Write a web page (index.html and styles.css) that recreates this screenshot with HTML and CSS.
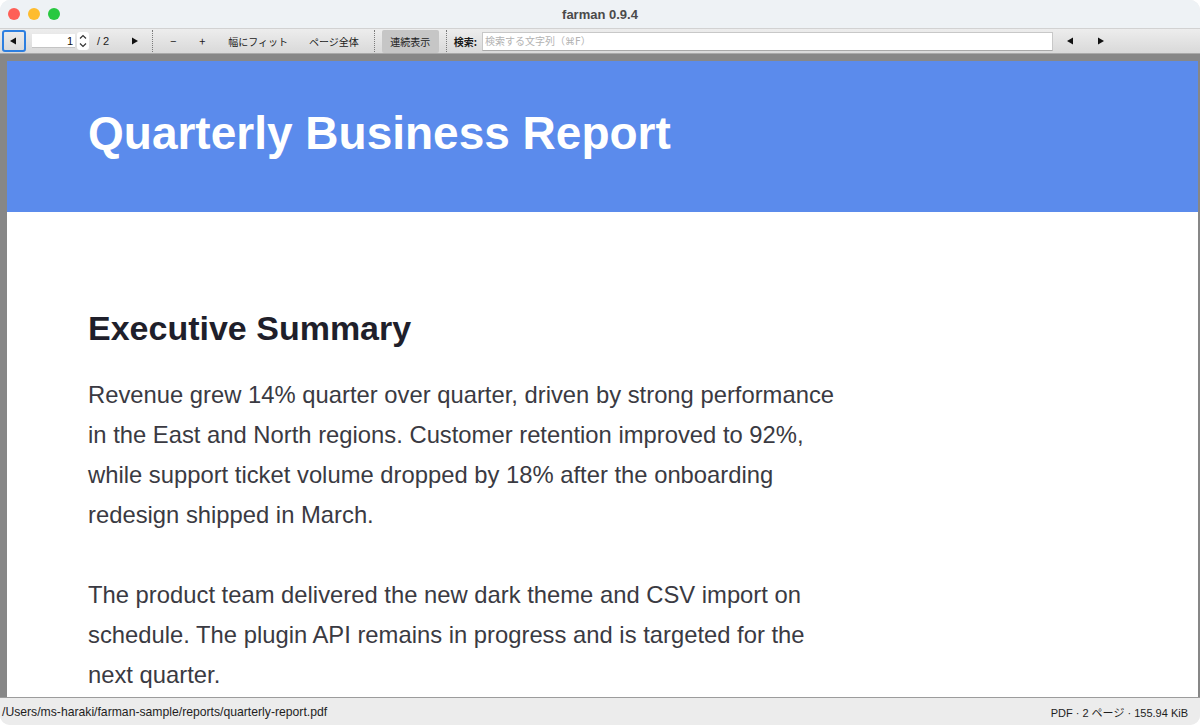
FILE: index.html
```html
<!DOCTYPE html>
<html lang="ja">
<head>
    <meta charset="UTF-8">
    <meta name="viewport" content="width=device-width, initial-scale=1.0">
    <title>farman 0.9.4</title>
    <link rel="stylesheet" href="styles.css">
</head>
<body>
    <div class="window">
        <header class="titlebar">
            <div class="lights">
                <span class="light red"></span>
                <span class="light yellow"></span>
                <span class="light green"></span>
            </div>
            <div class="title">farman 0.9.4</div>
        </header>

        <div class="toolbar">
            <button class="tb-btn back-btn" title="前のページ">
                <svg width="8" height="8" viewBox="0 0 8 8"><path d="M1 4 L7 0.5 L7 7.5 Z" fill="#111"/></svg>
            </button>
            <input class="page-input" type="text" value="1">
            <span class="stepper">
                <svg width="12" height="18" viewBox="0 0 12 18">
                    <path d="M3 6.5 L6 3.5 L9 6.5" fill="none" stroke="#333" stroke-width="1.2"/>
                    <path d="M3 11.5 L6 14.5 L9 11.5" fill="none" stroke="#333" stroke-width="1.2"/>
                </svg>
            </span>
            <span class="page-total">/ 2</span>
            <button class="tb-btn next-btn" title="次のページ">
                <svg width="8" height="8" viewBox="0 0 8 8"><path d="M7 4 L1 0.5 L1 7.5 Z" fill="#111"/></svg>
            </button>
            <span class="sep sep-1"></span>
            <button class="tb-btn zoom-out">−</button>
            <button class="tb-btn zoom-in">+</button>
            <button class="tb-btn fit-width">幅にフィット</button>
            <button class="tb-btn fit-page">ページ全体</button>
            <span class="sep sep-2"></span>
            <button class="tb-btn toggle active">連続表示</button>
            <span class="sep sep-3"></span>
            <label class="search-label">検索:</label>
            <input class="search-input" type="text" placeholder="検索する文字列（⌘F）">
            <button class="tb-btn find-prev">
                <svg width="8" height="8" viewBox="0 0 8 8"><path d="M1 4 L7 0.5 L7 7.5 Z" fill="#111"/></svg>
            </button>
            <button class="tb-btn find-next">
                <svg width="8" height="8" viewBox="0 0 8 8"><path d="M7 4 L1 0.5 L1 7.5 Z" fill="#111"/></svg>
            </button>
        </div>

        <main class="viewer">
            <div class="page">
                <div class="page-header">
                    <h1>Quarterly Business Report</h1>
                </div>
                <div class="page-body">
                    <h2>Executive Summary</h2>
                    <p>Revenue grew 14% quarter over quarter, driven by strong performance in the East and North regions. Customer retention improved to 92%, while support ticket volume dropped by 18% after the onboarding redesign shipped in March.</p>
                    <p>The product team delivered the new dark theme and CSV import on schedule. The plugin API remains in progress and is targeted for the next quarter.</p>
                </div>
            </div>
        </main>

        <footer class="statusbar">
            <span class="file-path">/Users/ms-haraki/farman-sample/reports/quarterly-report.pdf</span>
            <span class="file-info">PDF · 2 ページ · 155.94 KiB</span>
        </footer>
    </div>
</body>
</html>
```

FILE: styles.css
```css
* {
    margin: 0;
    padding: 0;
    box-sizing: border-box;
}

body {
    background: #ffffff;
    font-family: 'Liberation Sans', 'Noto Sans CJK JP', sans-serif;
    width: 1200px;
    height: 725px;
    overflow: hidden;
}

.window {
    width: 1200px;
    height: 725px;
    display: flex;
    flex-direction: column;
    border-radius: 10px;
    overflow: hidden;
    background: #ececec;
}

/* title bar */
.titlebar {
    height: 28px;
    flex-shrink: 0;
    background: #eef2f5;
    display: flex;
    align-items: center;
    position: relative;
}

.lights {
    display: flex;
    gap: 8px;
    padding-left: 8px;
}

.light {
    width: 12px;
    height: 12px;
    border-radius: 50%;
}

.light.red { background: #fe5f57; }
.light.yellow { background: #febc2e; }
.light.green { background: #28c840; }

.title {
    position: absolute;
    left: 0;
    right: 0;
    text-align: center;
    font-size: 13px;
    font-weight: bold;
    color: #4a4a4a;
}

/* toolbar */
.toolbar {
    height: 26px;
    flex-shrink: 0;
    display: flex;
    align-items: center;
    background: linear-gradient(#ededed, #d9d9d9);
    border-top: 1px solid #d2d2d2;
    border-bottom: 1px solid #a9a9a9;
    font-family: 'Noto Sans CJK JP', 'Liberation Sans', sans-serif;
    font-size: 10px;
    color: #1a1a1a;
}

.tb-btn {
    background: none;
    border: none;
    font-family: inherit;
    font-size: 10px;
    color: #1a1a1a;
    height: 22px;
    display: flex;
    align-items: center;
    justify-content: center;
}

.back-btn {
    margin-left: 2px;
    width: 24px;
    border: 2px solid #2d7fe0;
    border-radius: 3px;
    padding-right: 2px;
}

.page-input {
    margin-left: 6px;
    width: 43px;
    height: 14px;
    border: none;
    border-bottom: 1px solid #c4c4c4;
    background: #fff;
    text-align: right;
    font-family: 'Liberation Sans', sans-serif;
    font-size: 11px;
    padding: 0 2px;
    color: #111;
}

.stepper {
    margin-left: 2px;
    width: 12px;
    height: 18px;
    background: #fff;
    border-radius: 3px;
    display: flex;
}

.page-total {
    margin-left: 8px;
    font-family: 'Liberation Sans', sans-serif;
    font-size: 11px;
}

.next-btn {
    margin-left: 18px;
    width: 16px;
}

.sep {
    width: 0;
    height: 22px;
    border-left: 1px dotted #7a7a7a;
}

.sep-1 { margin-left: 9px; }
.sep-2 { margin-left: 15px; }
.sep-3 { margin-left: 7px; }

.zoom-out {
    margin-left: 13px;
    width: 14px;
    font-size: 11px;
}

.zoom-in {
    margin-left: 15px;
    width: 14px;
    font-size: 11px;
}

.fit-width {
    margin-left: 19px;
}

.fit-page {
    margin-left: 21px;
}

.toggle {
    margin-left: 7px;
    width: 57px;
    height: 23px;
    background: #c6c6c6;
    border-radius: 2px;
}

.search-label {
    margin-left: 7px;
    font-weight: bold;
}

.search-input {
    margin-left: 5px;
    width: 571px;
    height: 19px;
    border: 1px solid #c8c8c8;
    border-bottom-color: #a8a8a8;
    background: #fff;
    font-family: 'DejaVu Sans', 'Noto Sans CJK JP', sans-serif;
    font-size: 10px;
    padding: 0 2px;
}

.search-input::placeholder {
    color: #b3b3b3;
}

.find-prev {
    margin-left: 9px;
    width: 16px;
}

.find-next {
    margin-left: 15px;
    width: 16px;
}

/* document viewer */
.viewer {
    flex: 1;
    min-height: 0;
    background: #878787;
    padding: 7px 2px 0 7px;
    overflow: hidden;
}

.page {
    background: #fff;
    height: 100%;
    font-family: 'Liberation Sans', 'Helvetica', sans-serif;
}

.page-header {
    height: 151px;
    background: #5b8bec;
    padding: 46px 81px 0;
}

.page-header h1 {
    color: #fff;
    font-size: 46px;
    font-weight: bold;
    line-height: 1.15;
}

.page-body {
    padding: 96px 81px 0;
    max-width: 922px;
}

.page-body h2 {
    font-size: 34px;
    line-height: 1.2;
    font-weight: bold;
    color: #1f1f2b;
    margin-bottom: 26px;
}

.page-body p {
    font-size: 23.8px;
    line-height: 40px;
    color: #3a3a42;
}

.page-body p + p {
    margin-top: 40px;
}

/* status bar */
.statusbar {
    height: 28px;
    flex-shrink: 0;
    border-top: 1px solid #9c9c9c;
    background: #ececec;
    display: flex;
    align-items: center;
    justify-content: space-between;
    padding: 0 12px 0 2px;
    font-family: 'Liberation Sans', 'Noto Sans CJK JP', sans-serif;
    font-size: 11px;
    color: #1e1e1e;
}

.file-path {
    font-size: 12.2px;
}
```
